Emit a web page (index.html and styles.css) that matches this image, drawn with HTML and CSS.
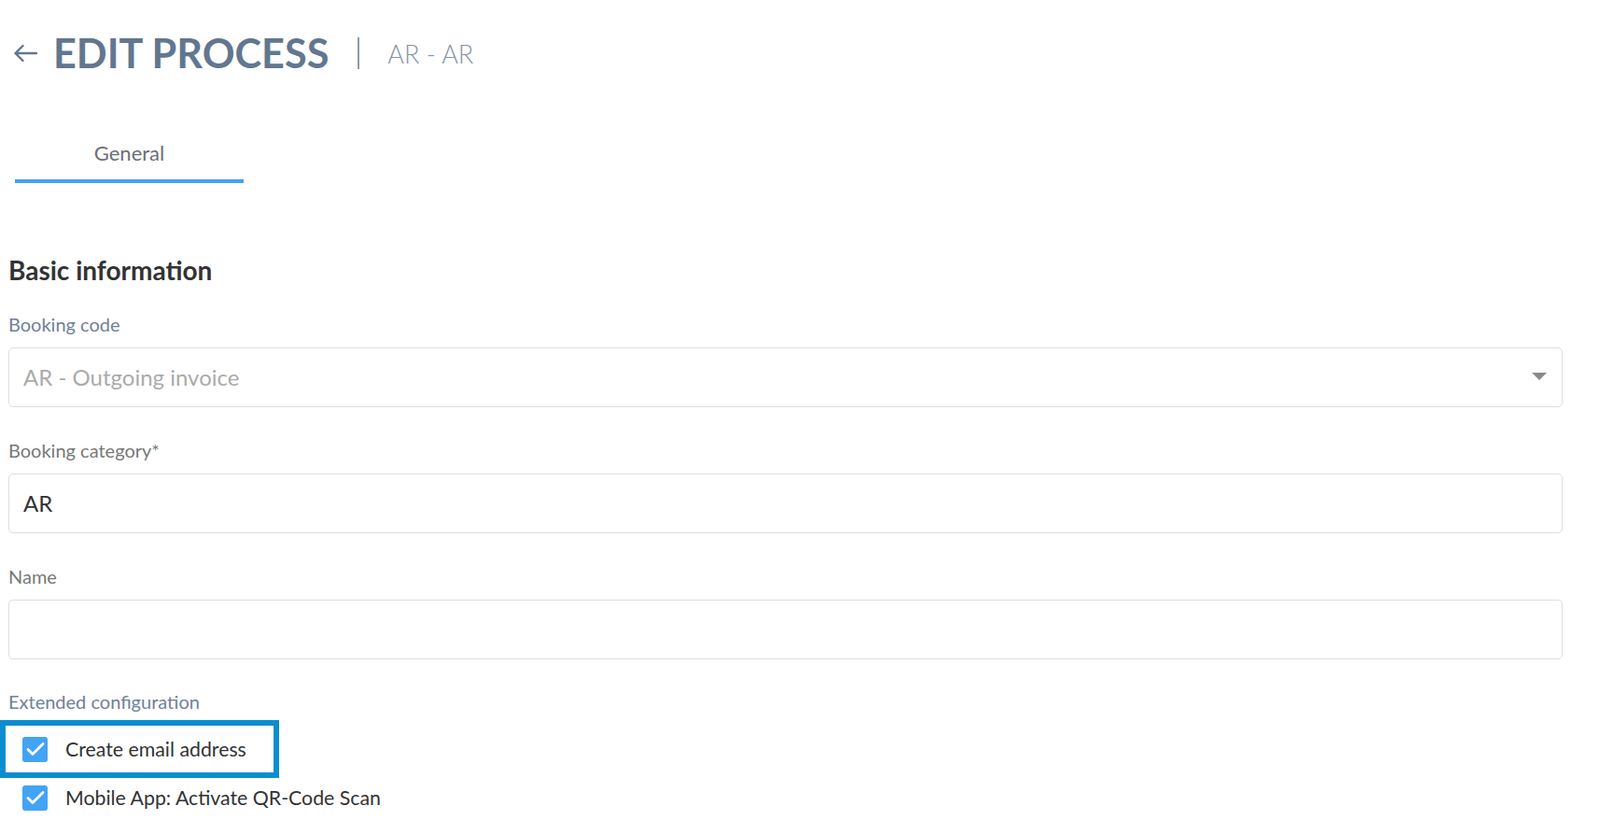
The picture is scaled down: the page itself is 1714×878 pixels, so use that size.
FILE: index.html
```html
<!DOCTYPE html>
<html lang="en">
<head>
  <meta charset="UTF-8">
  <meta name="viewport" content="width=device-width, initial-scale=1.0">
  <title>Edit process</title>
  <link rel="stylesheet" href="styles.css">
</head>
<body>
  <div class="page">
    <header class="header">
      <a class="back" href="#">
        <svg width="26" height="20" viewBox="0 0 26 20">
          <path d="M25 10H2.5M10.5 2L2.5 10L10.5 18" fill="none" stroke="#62778f" stroke-width="2.4" stroke-linecap="round" stroke-linejoin="round"/>
        </svg>
      </a>
      <h1 class="title">EDIT PROCESS</h1>
      <span class="divider"></span>
      <span class="subtitle">AR - AR</span>
    </header>

    <nav class="tabs">
      <div class="tab active">General</div>
    </nav>

    <h2 class="section-title">Basic information</h2>

    <div class="field">
      <label class="label label-blue">Booking code</label>
      <div class="select">
        <span class="placeholder">AR - Outgoing invoice</span>
        <span class="caret"></span>
      </div>
    </div>

    <div class="field">
      <label class="label" for="category">Booking category*</label>
      <input class="input" id="category" type="text" value="AR">
    </div>

    <div class="field">
      <label class="label" for="name">Name</label>
      <input class="input" id="name" type="text" value="">
    </div>

    <div class="field-last">
      <label class="label label-blue">Extended configuration</label>
      <div class="highlight">
        <div class="check-row">
          <span class="checkbox">
            <svg width="20" height="16" viewBox="0 0 20 16"><path d="M2 8.5L7 13.5L18 2.5" fill="none" stroke="#fff" stroke-width="2.8" stroke-linecap="round" stroke-linejoin="round"/></svg>
          </span>
          <span class="check-text">Create email address</span>
        </div>
      </div>
      <div class="check-row check-row-plain">
        <span class="checkbox">
          <svg width="20" height="16" viewBox="0 0 20 16"><path d="M2 8.5L7 13.5L18 2.5" fill="none" stroke="#fff" stroke-width="2.8" stroke-linecap="round" stroke-linejoin="round"/></svg>
        </span>
        <span class="check-text">Mobile App: Activate QR-Code Scan</span>
      </div>
    </div>
  </div>
</body>
</html>
```

FILE: styles.css
```css
body {
  margin: 0;
  padding: 0;
  font-family: 'Lato', 'Open Sans', sans-serif;
  background-color: white;
  color: #333;
}

.page {
  padding: 0 40px 0 9px;
}

.header {
  display: flex;
  align-items: center;
  height: 114px;
}

.back {
  display: flex;
  margin-left: 5px;
  margin-right: 17px;
}

.title {
  margin: 0;
  font-size: 43.2px;
  font-weight: 700;
  color: #62778f;
  line-height: 1;
}

.divider {
  width: 2px;
  height: 34px;
  margin-left: 31px;
  background-color: #8d9aaa;
}

.subtitle {
  margin-left: 30px;
  font-size: 27px;
  font-weight: 300;
  color: #8795a5;
}

.tabs {
  display: flex;
  padding-left: 7px;
}

.tab {
  width: 245px;
  text-align: center;
  padding-top: 36px;
  padding-bottom: 14px;
  line-height: 28px;
  font-size: 22px;
  color: #6b6f76;
  border-bottom: 4px solid transparent;
}

.tab.active {
  border-bottom-color: #42a0f5;
}

.section-title {
  margin: 76px 0 0 0;
  font-size: 28px;
  line-height: 34px;
  font-weight: 700;
  color: #333;
}

.field {
  margin-top: 29px;
}

.field + .field {
  margin-top: 34px;
}

.field-last {
  margin-top: 33px;
}

.label {
  display: block;
  font-size: 20px;
  line-height: 24px;
  color: #787878;
  margin-bottom: 13px;
}

.label-blue {
  color: #6f8199;
}

.field-last .label {
  margin-bottom: 8px;
}

.select,
.input {
  box-sizing: border-box;
  width: 100%;
  height: 64px;
  border: 1px solid #dedede;
  border-radius: 5px;
  background-color: white;
}

.select {
  display: flex;
  align-items: center;
  justify-content: space-between;
  padding: 0 16px 2px 15px;
}

.placeholder {
  font-size: 24px;
  color: #ababab;
}

.caret {
  width: 0;
  height: 0;
  border-left: 8px solid transparent;
  border-right: 8px solid transparent;
  border-top: 8px solid #8a8a8a;
}

.input {
  display: block;
  padding: 0 15px 2px;
  font-family: 'Lato', 'Open Sans', sans-serif;
  font-size: 24px;
  color: #333;
  outline: none;
}

.highlight {
  box-sizing: border-box;
  width: 299px;
  height: 62px;
  margin-left: -9px;
  border: 6px solid #0a8ecf;
  display: flex;
  align-items: center;
  padding-left: 18px;
}

.check-row {
  display: flex;
  align-items: center;
}

.check-row-plain {
  height: 42px;
  padding-left: 15px;
}

.checkbox {
  width: 27px;
  height: 27px;
  border-radius: 3px;
  background-color: #43a3f5;
  display: flex;
  align-items: center;
  justify-content: center;
  margin-right: 19px;
}

.check-text {
  font-size: 21.3px;
  color: #333;
}
```
